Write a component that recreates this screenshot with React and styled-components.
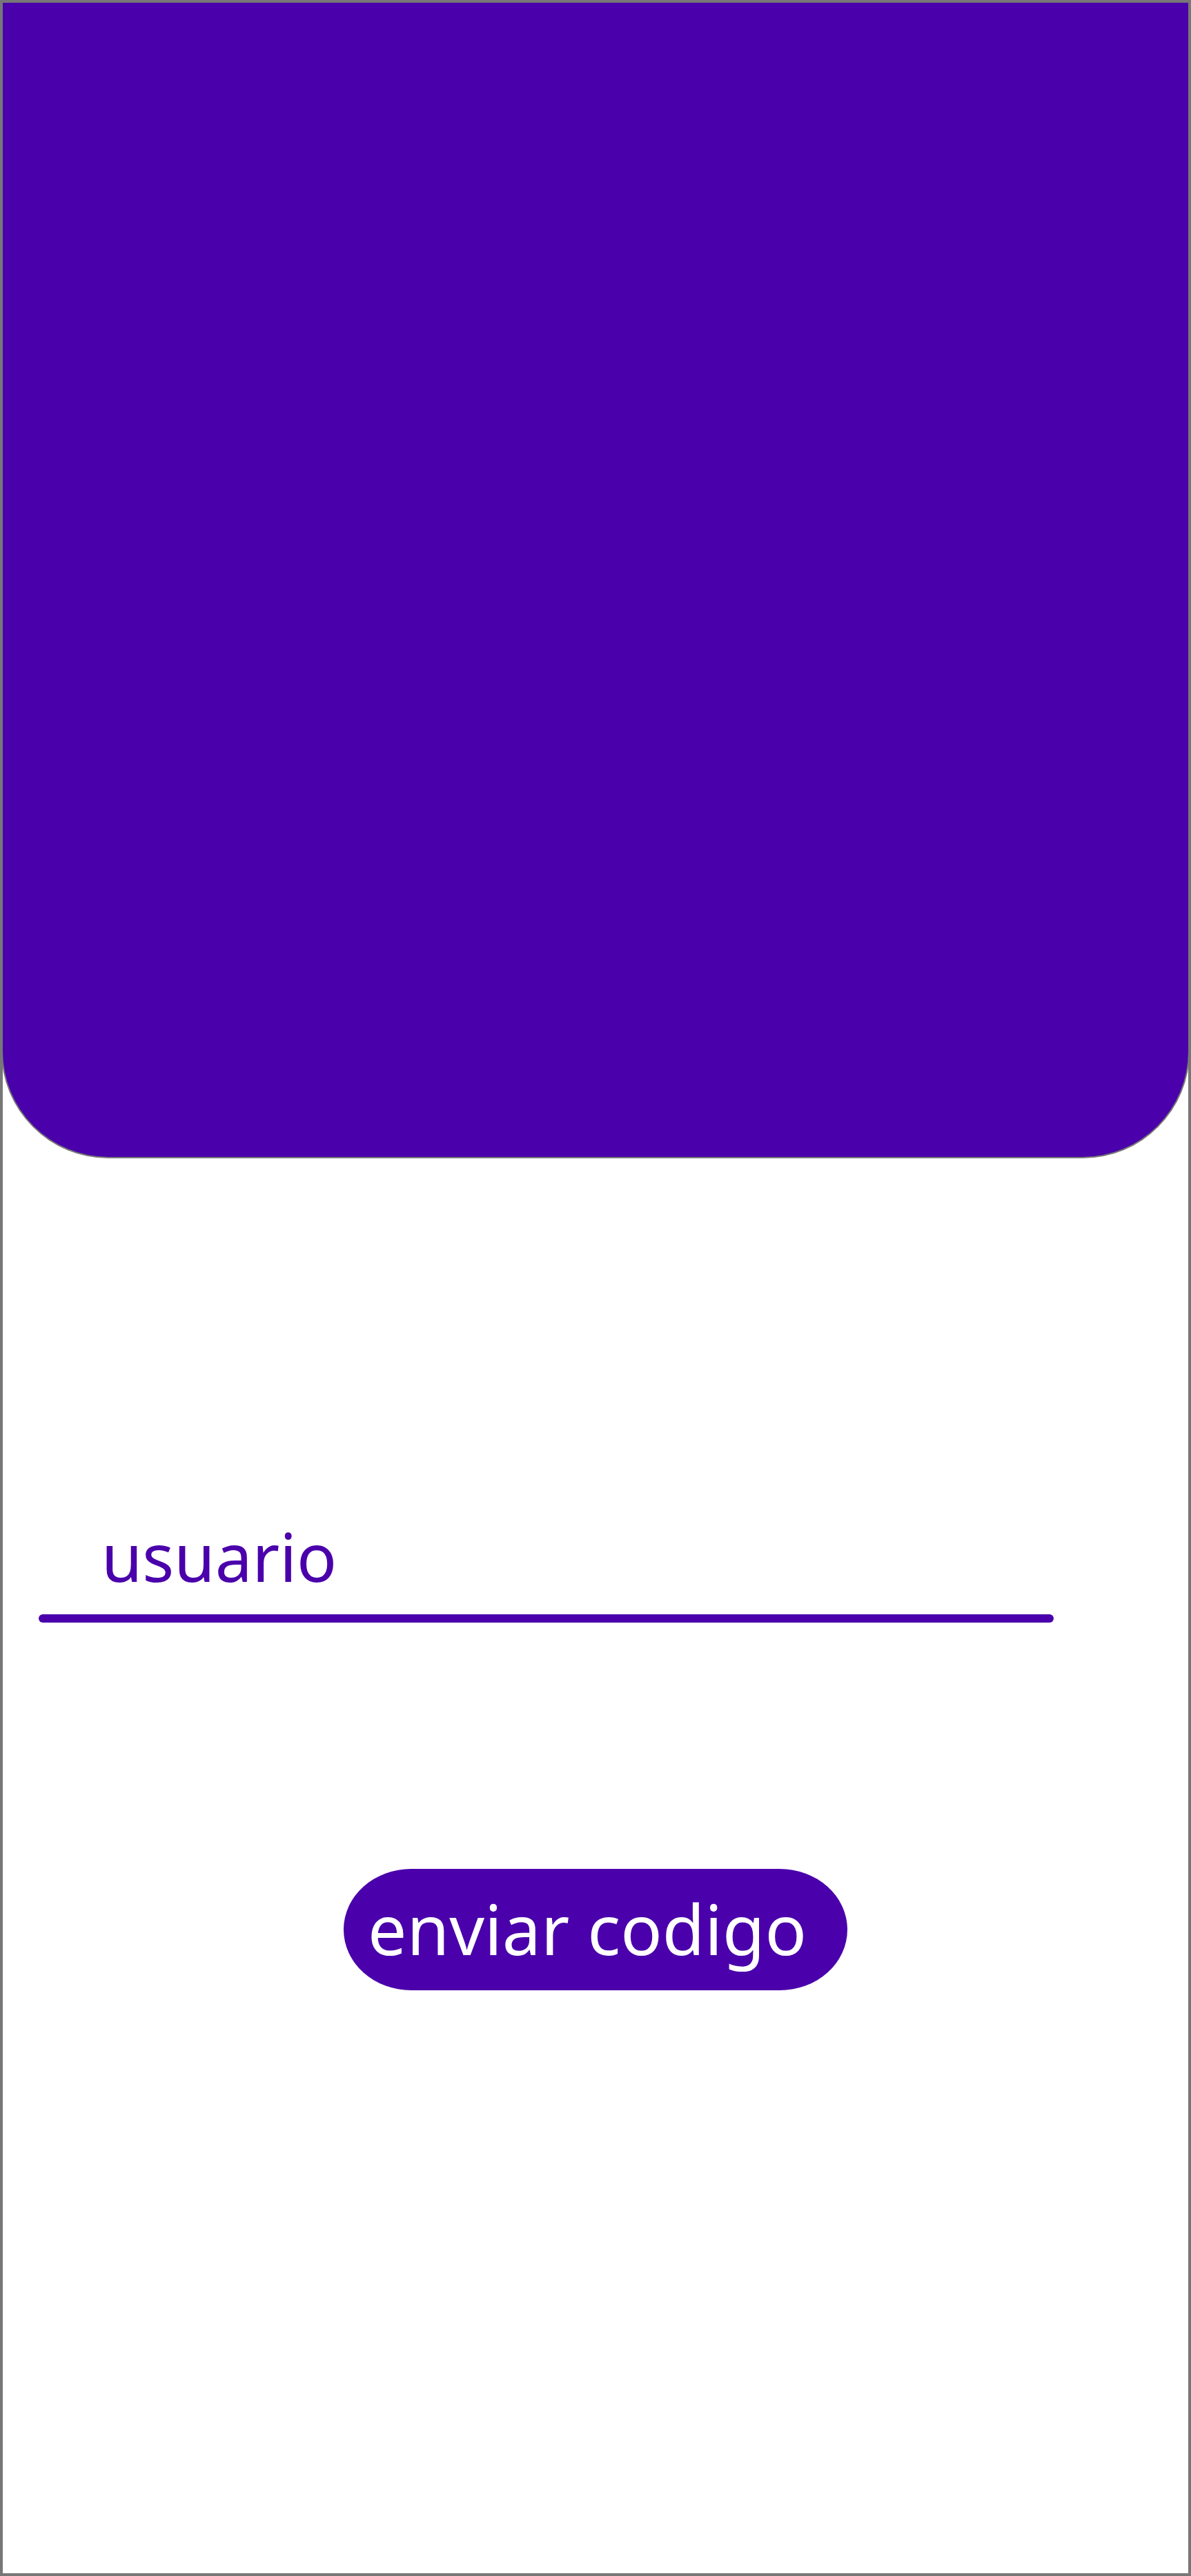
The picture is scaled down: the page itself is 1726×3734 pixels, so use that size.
import React from 'react'
import styled, { createGlobalStyle } from 'styled-components'

const purple = '#4a00ab'
const frameGray = '#777777'

const GlobalStyle = createGlobalStyle`
  html, body {
    margin: 0;
    padding: 0;
    background: #ffffff;
  }
  * {
    box-sizing: border-box;
  }
`

const Frame = styled.div`
  width: 1726px;
  height: 3734px;
  border: 4px solid ${frameGray};
  background: #ffffff;
  display: flex;
  flex-direction: column;
  font-family: "Noto Sans", "Open Sans", sans-serif;
`

const Header = styled.header`
  height: 1675px;
  margin: 0 -2px;
  background: ${purple};
  border: 2px solid ${frameGray};
  border-top: none;
  border-radius: 0 0 155px 155px;
  flex-shrink: 0;
`

const Form = styled.form`
  display: flex;
  flex-direction: column;
  padding-top: 512px;
`

const Field = styled.label`
  display: flex;
  flex-direction: column;
  gap: 20px;
  padding-left: 52px;
`

const FieldLabel = styled.span`
  padding-left: 91px;
  font-size: 96px;
  line-height: 129px;
  color: ${purple};
`

const Underline = styled.div`
  width: 1471px;
  height: 12px;
  border-radius: 6px;
  background: ${purple};
`

const Actions = styled.div`
  display: flex;
  justify-content: center;
  padding-top: 357px;
`

const SendButton = styled.button`
  width: 730px;
  height: 176px;
  padding: 0 24px 4px 0;
  border: none;
  border-radius: 98px / 88px;
  background: ${purple};
  color: #ffffff;
  font-family: inherit;
  font-size: 100px;
  line-height: 136px;
  cursor: pointer;
`

const App = () => {
  return (
    <>
      <GlobalStyle />
      <Frame>
        <Header />
        <Form onSubmit={e => e.preventDefault()}>
          <Field>
            <FieldLabel>usuario</FieldLabel>
            <Underline />
          </Field>
          <Actions>
            <SendButton type="submit">enviar codigo</SendButton>
          </Actions>
        </Form>
      </Frame>
    </>
  )
}

export default App
